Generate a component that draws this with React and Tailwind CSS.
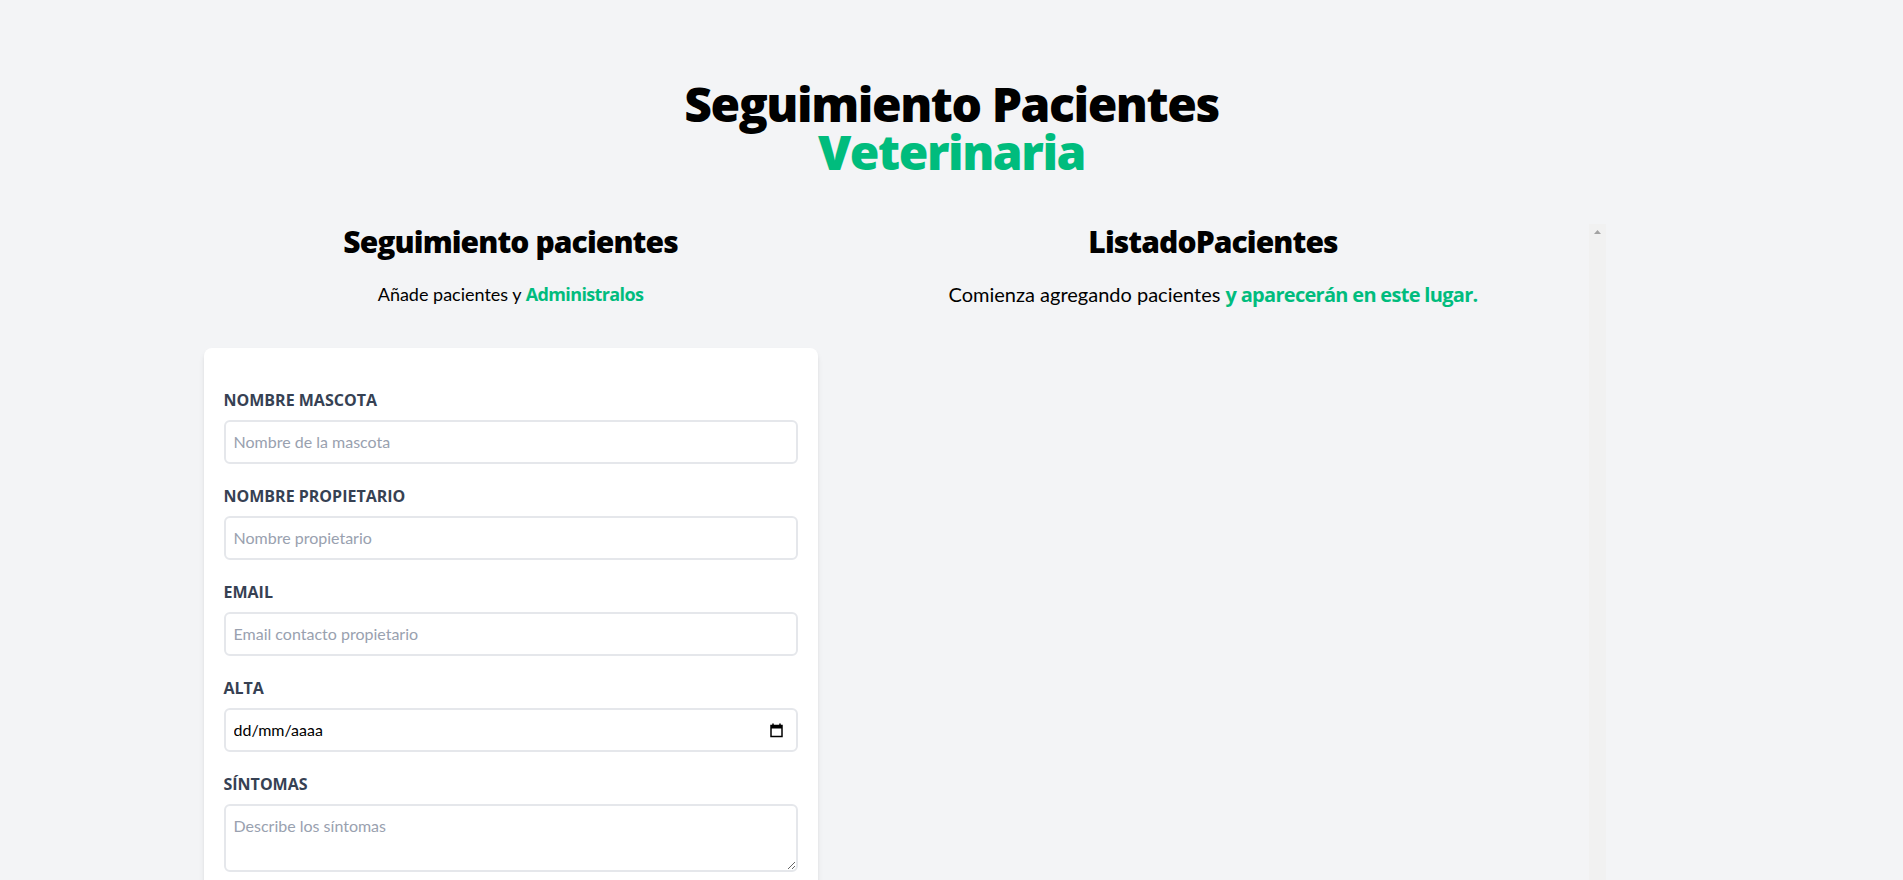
import React from "react";

function Field({ label, children }) {
  return (
    <div className="mb-5">
      <label className="block text-gray-700 uppercase font-bold font-['Open_Sans',sans-serif]">
        {label}
      </label>
      {children}
    </div>
  );
}

const inputClass =
  "border-2 border-gray-200 w-full p-2 mt-2 placeholder:text-gray-400 rounded-md outline-none";

const headingFont = "font-['Open_Sans',sans-serif] font-extrabold tracking-[-0.03em]";
const boldSpan = "text-emerald-500 font-bold tracking-[-0.035em] font-['Open_Sans',sans-serif]";

function Formulario() {
  return (
    <div className="w-[614px] mx-5 shrink-0">
      <h2 className={`${headingFont} text-3xl text-center`}>Seguimiento pacientes</h2>
      <p className="text-lg mt-5 text-center mb-10">
        Añade pacientes y <span className={boldSpan}>Administralos</span>
      </p>

      <form className="bg-white shadow-md rounded-lg py-10 px-5 mb-10">
        <Field label="Nombre Mascota">
          <input type="text" placeholder="Nombre de la mascota" className={inputClass} />
        </Field>
        <Field label="Nombre Propietario">
          <input type="text" placeholder="Nombre propietario" className={inputClass} />
        </Field>
        <Field label="Email">
          <input type="email" placeholder="Email contacto propietario" className={inputClass} />
        </Field>
        <Field label="Alta">
          <div className="flex items-center border-2 border-gray-200 w-full p-2 mt-2 rounded-md">
            <input
              type="text"
              placeholder="dd/mm/aaaa"
              className="flex-1 outline-none placeholder:text-black"
            />
            <svg width="15" height="15" viewBox="0 0 15 15" className="mr-1">
              <path d="M4 0.5v2.5M11 0.5v2.5" stroke="#000" strokeWidth="1.5" />
              <rect x="2" y="2.5" width="11" height="11" fill="none" stroke="#000" strokeWidth="1.5" />
              <rect x="2" y="2.5" width="11" height="3" fill="#000" />
            </svg>
          </div>
        </Field>
        <Field label="Síntomas">
          <textarea placeholder="Describe los síntomas" className={inputClass} />
        </Field>
        <input
          type="submit"
          value="Agregar paciente"
          className="bg-emerald-500 w-full p-3 text-white uppercase font-bold rounded-md"
        />
      </form>
    </div>
  );
}

function ListadoPacientes() {
  return (
    <div className="w-[768px] h-screen flex shrink-0">
      <div className="flex-1">
        <h2 className={`${headingFont} text-3xl text-center`}>ListadoPacientes</h2>
        <p className="text-xl mt-5 mb-10 text-center">
          Comienza agregando pacientes{" "}
          <span className={boldSpan}>y aparecerán en este lugar.</span>
        </p>
      </div>
      {/* pista de la barra de desplazamiento */}
      <div className="w-[17px] bg-[#f1f1f1] flex justify-center pt-[6px]">
        <svg width="7" height="4" viewBox="0 0 7 4">
          <path d="M3.5 0L7 4H0z" fill="#a3a3a3" />
        </svg>
      </div>
    </div>
  );
}

export default function App() {
  return (
    <div className="h-screen overflow-hidden bg-gray-100 text-black font-['Lato',sans-serif]">
      <div className="w-[1536px] mx-auto pt-20">
        <h1 className={`${headingFont} text-5xl leading-none text-center`}>
          Seguimiento Pacientes{" "}
          <span className="block text-emerald-500">Veterinaria</span>
        </h1>
        <div className="mt-12 flex">
          <Formulario />
          <ListadoPacientes />
        </div>
      </div>
    </div>
  );
}
